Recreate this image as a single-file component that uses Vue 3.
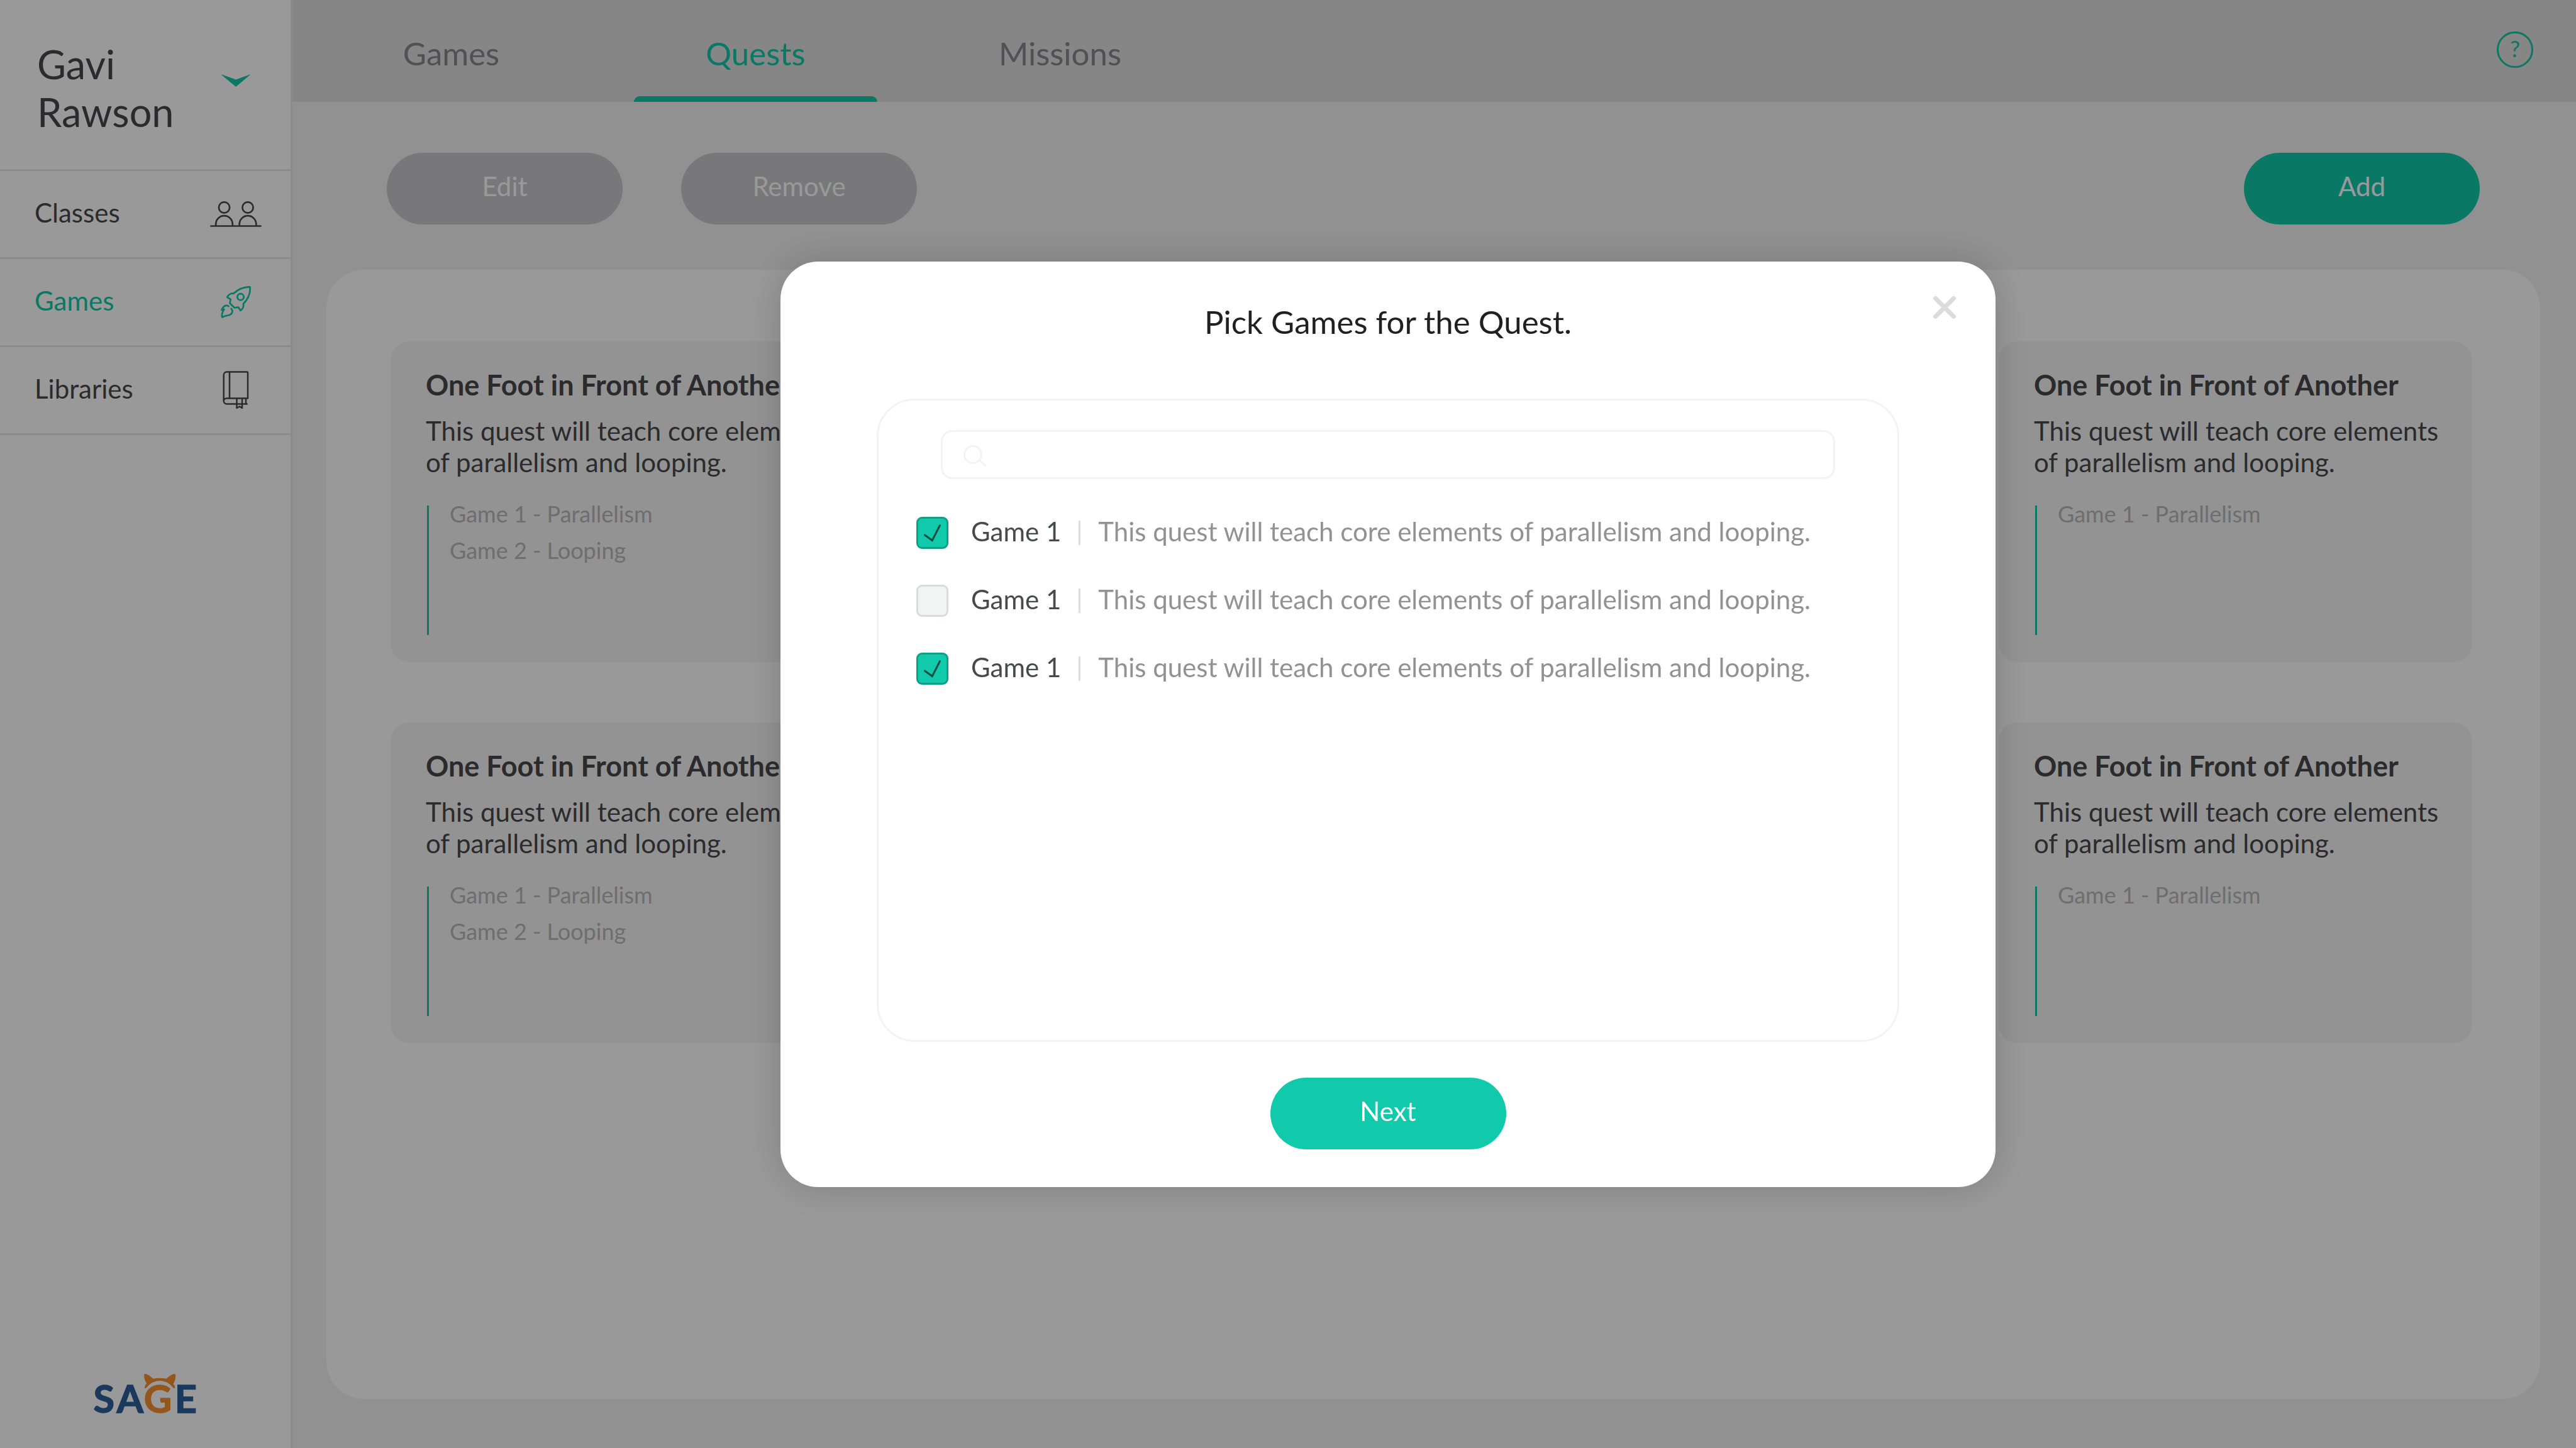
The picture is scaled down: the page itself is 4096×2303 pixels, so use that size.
<script setup>
import { ref } from 'vue'

const navItems = [
  { id: 'classes', label: 'Classes' },
  { id: 'games', label: 'Games' },
  { id: 'libraries', label: 'Libraries' },
]
const activeNav = ref('games')

const tabs = ['Games', 'Quests', 'Missions']
const activeTab = ref('Quests')

const title = 'One Foot in Front of Another'
const text = 'This quest will teach core elements of parallelism and looping.'
const quests = [
  { id: 1, title, text, games: ['Game 1 - Parallelism', 'Game 2 - Looping'] },
  { id: 2, title, text, games: ['Game 1 - Parallelism'] },
  { id: 3, title, text, games: ['Game 1 - Parallelism', 'Game 2 - Looping'] },
  { id: 4, title, text, games: ['Game 1 - Parallelism'] },
]

const search = ref('')
const options = ref([
  { id: 1, name: 'Game 1', text, picked: true },
  { id: 2, name: 'Game 1', text, picked: false },
  { id: 3, name: 'Game 1', text, picked: true },
])
</script>

<template>
  <div class="page">
    <aside class="sidebar">
      <div class="user">
        <span class="user-name">Gavi<br />Rawson</span>
        <button class="icon-button slot" type="button" aria-label="Account menu">
          <svg width="48" height="20" viewBox="0 0 48 20"><path d="M0 0 24 8.500 48 0 24 20Z" fill="currentColor" /></svg>
        </button>
      </div>
      <nav>
        <a
          v-for="item in navItems"
          :key="item.id"
          href="#"
          class="nav-item"
          :class="{ active: item.id === activeNav }"
          @click.prevent="activeNav = item.id"
        >
          <span class="nav-label">{{ item.label }}</span>
          <span class="slot">
            <svg v-if="item.id === 'classes'" width="82" height="42" viewBox="0 0 82 42" fill="none" stroke="currentColor" stroke-width="2.700" stroke-linecap="round">
              <circle cx="22.500" cy="10" r="8.600" />
              <circle cx="60" cy="10" r="8.600" />
              <path d="M9.200 38.500V36.500a13.300 13.300 0 0 1 26.600 0V38.500M46.700 38.500V36.500a13.300 13.300 0 0 1 26.600 0V38.500M1.500 39.500H80.500" />
            </svg>
            <svg v-else-if="item.id === 'games'" width="48" height="51" viewBox="0 0 48 51" fill="none" stroke="currentColor" stroke-width="2.700" stroke-linecap="round" stroke-linejoin="round">
              <path d="M46.500 1.300C36 1.200 28 4.500 20.500 11.800 16 11.300 12.500 13.500 10.200 17.700L15.700 21.200 14.500 27.200 21.500 34.300 28 33.600 31.300 38.800C34.800 36.500 37 33.200 35.900 28.300 43.500 20.500 47.500 11.500 46.500 1.300Z" />
              <circle cx="31.500" cy="17.300" r="5.100" />
              <path d="M12.500 32C8.500 29.200 4.200 31.300 1.500 38L5.300 37C2.200 41.500 1 45 2.300 49.500 6 47.500 9 47.200 13 46.300 18 45 20.300 40.500 16.800 36" />
            </svg>
            <svg v-else width="42" height="61" viewBox="0 0 42 61" fill="none" stroke="currentColor" stroke-width="2.500" stroke-linejoin="round">
              <path d="M39.700 52.500H6.500A5 5 0 0 1 1.700 47.500V6.500A5 5 0 0 1 6.500 1.500H38.500A1.500 1.500 0 0 1 40 3V43.500H6.500A4.700 4.700 0 0 0 1.700 48M11 1.500V43.500M37 43.500V52.500M22.500 43.500V59L27 56.500 31 59V43.500" />
            </svg>
          </span>
        </a>
      </nav>
      <svg class="logo" width="163" height="64" viewBox="0 0 488 192" role="img" aria-label="SAGE">
        <g font-family="Lato, sans-serif" font-weight="700" font-size="184" stroke-width="4">
          <g fill="#2b5f9b" stroke="#2b5f9b">
            <text x="-5" y="186">S</text>
            <text x="106" y="186">A</text>
            <text x="383" y="186">E</text>
          </g>
          <text x="236" y="186" fill="#f78f30" stroke="#f78f30">G</text>
        </g>
        <path fill="#f78f30" d="M237 4Q238 0 246 1 266 8 280 23 312 17 343 23 358 8 376 1 387-1 387 6 388 30 376 48 386 58 383 69 379 72 375 66 348 33 312 33 275 33 248 66 243 72 240 69 237 58 249 46 235 26 237 4Z" />
      </svg>
    </aside>

    <div class="main">
      <header class="topbar">
        <nav class="tabs">
          <a
            v-for="tab in tabs"
            :key="tab"
            href="#"
            class="tab"
            :class="{ active: tab === activeTab }"
            @click.prevent="activeTab = tab"
          ><span class="tab-label">{{ tab }}</span></a>
        </nav>
        <button class="help" type="button">?</button>
      </header>

      <main class="content">
        <div class="actions">
          <button class="pill muted" type="button">Edit</button>
          <button class="pill muted" type="button">Remove</button>
          <button class="pill add" type="button">Add</button>
        </div>
        <section class="board">
          <article v-for="quest in quests" :key="quest.id" class="card">
            <h2>{{ quest.title }}</h2>
            <p>{{ quest.text }}</p>
            <ul>
              <li v-for="game in quest.games" :key="game">{{ game }}</li>
            </ul>
          </article>
        </section>
      </main>
    </div>

    <div class="overlay">
      <section class="modal" role="dialog" aria-labelledby="modal-title">
        <button class="icon-button close" type="button" aria-label="Close">
          <svg width="36" height="36" viewBox="0 0 36 36" stroke="#dcdcdc" stroke-width="7" stroke-linecap="round"><path d="M3.500 3.500 32.500 32.500M32.500 3.500 3.500 32.500" /></svg>
        </button>
        <h1 id="modal-title">Pick Games for the Quest.</h1>
        <div class="picker">
          <label class="search">
            <svg width="37" height="42" viewBox="0 -6 37 42" fill="none" stroke="#f2f4f4" stroke-width="3" stroke-linecap="round">
              <circle cx="15" cy="15" r="13.500" />
              <path d="M26 24.500 35 32.500" />
            </svg>
            <input v-model="search" type="text" aria-label="Search games" />
          </label>
          <div class="options">
            <label v-for="option in options" :key="option.id" class="option">
              <span class="check">
                <input v-model="option.picked" type="checkbox" />
                <svg v-if="option.picked" width="51" height="51" viewBox="0 0 51 51" fill="none" stroke="#0a4f44" stroke-width="3" stroke-linecap="round"><path d="M13.500 29 25.300 37.500 37.500 13.500" /></svg>
              </span>
              <span class="option-name">{{ option.name }}</span>
              <span class="divider"></span>
              <span class="option-text">{{ option.text }}</span>
            </label>
          </div>
        </div>
        <button class="pill" type="button">Next</button>
      </section>
    </div>
  </div>
</template>

<style>
body {
  margin: 0;
}
</style>

<style scoped>
* {
  box-sizing: border-box;
}

.page {
  display: flex;
  min-height: 100vh;
  background: #f2f2f2;
  color: #48494b;
  font-family: Lato, sans-serif;
  font-size: 42px;
}

button,
input {
  font: inherit;
}

a {
  color: inherit;
  text-decoration: none;
}

svg {
  display: block;
}

h1,
h2,
p,
ul {
  margin: 0;
  padding: 0;
}

.icon-button {
  display: grid;
  place-items: center;
  padding: 0;
  border: 0;
  background: none;
  cursor: pointer;
}

.slot {
  display: grid;
  place-items: center;
  width: 84px;
  flex: none;
}

/* Sidebar */
.sidebar {
  display: flex;
  flex-direction: column;
  flex: none;
  width: 465px;
  border-right: 3px solid #e8e8e8;
  background: #fff;
}

.user {
  display: flex;
  justify-content: space-between;
  align-items: flex-start;
  height: 272px;
  padding: 64px 45px 0 59px;
  border-bottom: 3px solid #e8e8e8;
}

.user .icon-button {
  height: 128px;
  color: #10caab;
}

.user-name {
  font-size: 63px;
  line-height: 76px;
}

.nav-item {
  display: flex;
  justify-content: space-between;
  align-items: center;
  height: 140px;
  padding: 0 45px 0 55px;
  border-bottom: 3px solid #e8e8e8;
}

.nav-item.active {
  color: #10caab;
}

.nav-label {
  padding-bottom: 6px;
}

.logo {
  align-self: center;
  margin: auto 0 54px;
  overflow: visible;
}

/* Main column */
.main {
  display: flex;
  flex-direction: column;
  flex: 1;
}

.topbar {
  display: flex;
  justify-content: space-between;
  height: 162px;
  padding: 0 68px 0 59px;
  background: #dfdfe2;
}

.tabs {
  display: flex;
  gap: 97px;
}

.tab {
  display: grid;
  grid-template-rows: 1fr 9px;
  justify-items: center;
  align-items: center;
  width: 387px;
  padding-top: 16px;
  color: #87878a;
  font-size: 51px;
}

.tab.active {
  color: #10caab;
}

.tab.active::after {
  content: '';
  width: 100%;
  height: 9px;
  border-radius: 9px 9px 0 0;
  background: #10caab;
}

.help {
  width: 58px;
  height: 58px;
  margin-top: 50px;
  padding: 0 0 4px;
  border: 3px solid #10caab;
  border-radius: 50%;
  background: none;
  color: #10caab;
  font-size: 36px;
  line-height: 44px;
}

.content {
  display: flex;
  flex-direction: column;
  flex: 1;
  padding: 81px 57px 78px 54px;
}

.actions {
  display: flex;
  gap: 93px;
  padding: 0 96px;
}

.pill {
  width: 375px;
  height: 114px;
  padding: 0 0 8px;
  border: 0;
  border-radius: 57px;
  background: #10caab;
  color: #fff;
}

.pill.muted {
  background: #c8c8cb;
}

.pill.add {
  margin-left: auto;
}

.board {
  display: grid;
  grid-template-columns: 753px 753px;
  justify-content: space-between;
  align-content: start;
  gap: 96px;
  flex: 1;
  margin-top: 72px;
  padding: 114px 108px 114px 102px;
  border-radius: 60px;
  background: #fff;
}

.card {
  padding: 42px 50px 43px 56px;
  border-radius: 30px;
  background: #f5f5f6;
}

.card h2 {
  font-size: 45px;
  line-height: 54px;
}

.card p {
  margin-top: 21px;
  line-height: 50px;
}

.card ul {
  display: flex;
  flex-direction: column;
  gap: 32px;
  min-height: 206px;
  margin: 44px 0 0 2px;
  padding-left: 33px;
  border-left: 3px solid #10caab;
  color: #b8b8ba;
  font-size: 36px;
  line-height: 26px;
  list-style: none;
}

/* Dialog */
.overlay {
  position: fixed;
  inset: 0;
  display: grid;
  place-items: center;
  padding-left: 318px;
  background: rgba(0, 0, 0, 0.4);
}

.modal {
  position: relative;
  display: flex;
  flex-direction: column;
  align-items: center;
  width: 1932px;
  max-width: 90%;
  padding: 66px 153px 60px;
  border-radius: 60px;
  background: #fff;
  box-shadow: 0 0 60px rgba(0, 0, 0, 0.18);
}

.close {
  position: absolute;
  top: 43px;
  right: 51px;
  width: 60px;
  height: 60px;
}

h1 {
  color: #231f20;
  font-size: 51px;
  font-weight: 400;
  line-height: 60px;
}

.picker {
  align-self: stretch;
  min-height: 1023px;
  margin: 92px 0 57px;
  padding: 47px 99px;
  border: 3px solid #f2f4f4;
  border-radius: 60px;
}

.search {
  display: flex;
  align-items: center;
  gap: 24px;
  height: 78px;
  padding: 0 33px;
  border: 3px solid #f2f4f4;
  border-radius: 18px;
}

.search input {
  flex: 1;
  min-width: 0;
  padding: 0;
  border: 0;
  outline: 0;
  background: none;
  color: #48494b;
}

.options {
  display: flex;
  flex-direction: column;
  gap: 57px;
  margin: 60px -39px 0;
}

.option {
  display: flex;
  align-items: center;
  gap: 28px;
  line-height: 46px;
  white-space: nowrap;
}

.check {
  display: grid;
  margin-right: 8px;
}

.check input,
.check svg {
  grid-area: 1 / 1;
}

.check svg {
  pointer-events: none;
}

.check input {
  appearance: none;
  width: 51px;
  height: 51px;
  margin: 0;
  border: 3px solid #dadbdb;
  border-radius: 9px;
  background: #f2f4f4;
}

.check input:checked {
  border-color: #0f9f87;
  background: #10caab;
}

.divider {
  width: 3px;
  height: 39px;
  background: #dedede;
}

.option-name,
.option-text {
  padding-bottom: 4px;
}

.option-text {
  color: #929292;
}
</style>
